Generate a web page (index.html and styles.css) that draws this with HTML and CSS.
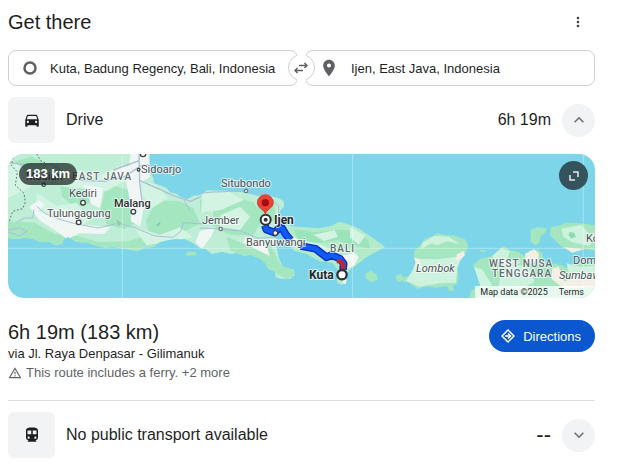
FILE: index.html
```
<!DOCTYPE html>
<html lang="en">
<head>
<meta charset="UTF-8">
<meta name="viewport" content="width=device-width, initial-scale=1.0">
<title>Get there</title>
<link rel="stylesheet" href="styles.css">
</head>
<body>
<main class="container">
  <header class="header">
    <h2>Get there</h2>
    <button class="menu-button" aria-label="More options">
      <svg width="16" height="16" viewBox="0 0 24 24"><path d="M12 8c1.1 0 2-.9 2-2s-.9-2-2-2-2 .9-2 2 .9 2 2 2zm0 2c-1.100 0-2 .9-2 2s.9 2 2 2 2-.9 2-2-.9-2-2-2zm0 6c-1.100 0-2 .9-2 2s.9 2 2 2 2-.9 2-2-.9-2-2-2z"/></svg>
    </button>
  </header>

  <form class="places">
    <label class="place" for="origin">
      <svg width="16" height="16" viewBox="0 0 16 16"><circle cx="8" cy="8" r="5.500" fill="none" stroke="#5f6062" stroke-width="2.500"/></svg>
      <input type="text" id="origin" aria-label="From" value="Kuta, Badung Regency, Bali, Indonesia">
    </label>
    <button type="button" class="swap" aria-label="Swap places">
      <svg width="14" height="14" viewBox="0 0 14 14" fill="none" stroke="#5f6062" stroke-width="1.500"><path d="M5 4.500h8M10.500 2l2.500 2.500L10.500 7M9 9.500H1M3.500 7L1 9.500 3.500 12"/></svg>
    </button>
    <label class="place place-to" for="destination">
      <svg width="20" height="20" viewBox="0 0 24 24"><path fill="#5f6062" d="M12 2C8.130 2 5 5.130 5 9c0 5.250 7 13 7 13s7-7.750 7-13c0-3.870-3.130-7-7-7zm0 9.500a2.500 2.500 0 0 1 0-5 2.500 2.500 0 0 1 0 5z"/></svg>
      <input type="text" id="destination" aria-label="To" value="Ijen, East Java, Indonesia">
    </label>
  </form>

  <section class="mode">
    <span class="mode-icon">
      <svg width="18" height="18" viewBox="0 0 24 24"><path d="M18.920 6.010C18.720 5.420 18.160 5 17.500 5h-11c-.66 0-1.210.42-1.420 1.010L3 12v8c0 .55.45 1 1 1h1c.55 0 1-.45 1-1v-1h12v1c0 .55.45 1 1 1h1c.55 0 1-.45 1-1v-8l-2.080-5.990zM6.500 16c-.83 0-1.500-.67-1.500-1.500S5.670 13 6.500 13s1.500.67 1.500 1.500S7.330 16 6.500 16zm11 0c-.83 0-1.500-.67-1.500-1.500s.67-1.500 1.500-1.500 1.500.67 1.500 1.500-.67 1.500-1.500 1.500zM5 11l1.500-4.500h11L19 11H5z"/></svg>
    </span>
    <h3>Drive</h3>
    <span class="mode-time">6h 19m</span>
    <button class="toggle" aria-label="Hide drive details">
      <svg width="20" height="20" viewBox="0 0 24 24"><path d="M12 8l-6 6 1.410 1.410L12 10.830l4.590 4.580L18 14z"/></svg>
    </button>
  </section>

  <div class="map">
    <svg class="map-canvas" viewBox="0 0 587 144" preserveAspectRatio="xMidYMid slice">
      <g transform="scale(.33333) translate(-24 -12)">
        <!-- Java -->
        <clipPath id="java"><path d="M0 0H450L449 62 453 72 460 84 461 99 480 106 500 114 510 127 528 131 545 142 562 148 580 137 600 135 622 121 680 122 730 127 775 138 810 137 838 146 851 153 852 170 840 182 832 196 837 216 830 236 826 258 829 290 838 328 848 349 862 354 882 360 884 376 870 387 850 388 828 382 825 365 805 357 795 338 783 328 768 321 750 314 733 318 710 309 690 312 668 305 636 312 618 298 600 294 580 280 556 268 525 267 500 271 478 277 461 291 434 293 412 304 390 299 364 295 340 291 317 293 280 285 262 278 230 276 205 261 192 266 187 281 164 286 152 276 120 276 100 267 72 263 54 267 0 261z"/></clipPath>
        <g clip-path="url(#java)">
          <path fill="#bfeed6" d="M0 0h900v400H0z"/>
          <path fill="#a4e6c0" d="M24 40l70-20 55 24-20 30-60 16-45 30zM180 90l65-10 30 30 10 44-60 20-40-36zM320 102l76 20 30-14 4 40-12 64-46 26-52-16-18-46zM470 150l70 4 40 20 20 46-56 30-44 20-50-8-12-50zM24 214l80 4 60 34 60 4 70 20 90-2 60-18 48 18-80 40-190-10L0 290zM640 180l50-40 70 16 30 50-30 50-70-2-50-24zM770 170l50-20 10 60-40 10zM680 260l70 30 60-10 30 60 50 30-30 20-60-40-110-50zM600 150l40-15 20 25-40 30-20-5z"/>
          <path fill="#d3f4e2" d="M24 20l60 46 10 44-70 34zM116 70l100-16 80 24 60-30 30 36-66 40-130-14zM110 128l60 40 60-10 40 50-40 36-70-14-50-60zM400 230l80 24 60-22 40 30-80 14-60 10zM420 90l46 14 40 40-50 30-30-40zM608 130l80-4 44 24-70 30-60 8zM660 196l60-26 30 30-30 40-60-10z"/>
          <path fill="#f0f6f4" d="M395 0h50l6 80-30 18 12 66-12 66-28-16-2-58-14-66zM88 170l28-20 18 14-20 20 70 22 16-30 22 10 10 36 100 10-20 20-74-2-36 18-24-18-60-40zM350 55l54-10v24l-60 16zM250 104l60 10-10 60-26-12zM600 244l44-12-8 24-30 40-20-20zM736 262l58 12 16 44-30-14-50-26zM832 178l14 10-14 80-8-24z"/>
          <path fill="#83c99f" d="M468 224l15-10-8 16zM350 208l14 12-10 8z"/>
        </g>
        <!-- Bali -->
        <path fill="#b2ebc9" d="M843 231l18-6 26 5 30 2 40 3 38-8 22-12 28 8 30 12 34 22 28 20 18 14-26 14-32 18-24 20-25 18-12 18 2 20-14 6-14-8 6-34-18-24-40-6-40-22-34-8-20-22z"/>
        <path fill="#9be3b8" d="M882 238l60 9 76-8 48 4 38 28 6 25-56-11-42-15-51 8-65-3z"/>
        <path fill="#d3f4e2" d="M940 254l64-13 10 19-42 13zM1050 231l46 26-20 27-26-22zM900 270l60 12 50 24-24 8-60-12z"/>
        <path fill="#f0f6f4" d="M1020 317l46-8 10 12-12 25-26 13-12-24zM870 252l24 16-12 12zM1030 387l10 2-3 14-10-4z"/>
        <!-- islands -->
        <path fill="#a4e6c0" d="M1095 371l18-9 17 12 3 15-17 8-18-10zM1188 377l16-6 8 18-16 7-8-9zM560 306h26l6 10-34 2z"/>
        <!-- Lombok -->
        <path fill="#a4e6c0" d="M1241 319l4-19 16-14 13-19 24-8 14-10 23 6 25 1 35 12 9 17-5 20-16 20-10 26 2 30-3 21-13 4 3 16-13 2-8-16-33 5-28-4-28 7-28-20-15-1v-14l25-4 24-12z"/>
        <path fill="#cdf2dd" d="M1268 278l34-20 44 2 34 22-40-8-26 11-22-4-30 17zM1250 326l62 2 74-10-14 36-4 44-50 2-60 10-40-18 20-32z"/>
        <path fill="#f3efe5" d="M1371 313l20-10 4 12-19 20-8-8zM1242 323l16 4 8 30-14-6z"/>
        <!-- Sumbawa -->
        <path fill="#a4e6c0" d="M1419 346l20-20 38-8 22-22 10-8 18 11 28 6 20 14 13-17 26-4 14 15 5 24 21 10 20-12 22 18 28-14 76 1v110h-395l10-30 28-14-8-28z"/>
        <path fill="#cdf2dd" d="M1476 318l30-24 24 10-8 22 40 10-30 24-36-20zM1550 345l40 6 14 44-44 26-64-6 4-38zM1422 350l24 8 30 46-30 18-10-30zM1700 340l40 10 60-4v50l-90-6z"/>
        <path fill="#f3efe5" d="M1575 311l28-13 14 14-4 20-20 8-16-8zM1656 357l20-8 16 44 60-13 48 6v24l-108 6-36-28z"/>
        <path fill="#7dd5ea" d="M1640 300l90 20 20 14-28 6-16-4-30 10-22-14-20 6z"/>
        <!-- Moyo and Tambora -->
        <path fill="#a4e6c0" d="M1592 240l18-8 30 2-4 14-14 12-4 18-12 8-14-10zM1652 232l28-6 20-8 40 2 60 8v76l-44-6-36 9-30-13-20-18-20-21zM1440 300l22 2-8 4h-14z"/>
        <path fill="#cdf2dd" d="M1684 236l60-12 20 24 24 10-20 30-54-12-24-16z"/>
        <path fill="#8edcae" d="M1708 246l14 2 6 12-14 6-8-10z"/>
        <path fill="#f3efe5" d="M1692 292l24 2 34 4-34 10z"/>
        <!-- roads -->
        <g fill="none" stroke="#a9bfd6" stroke-width="4">
          <path d="M24 38l74 8 58-4 34 26 40 22 84 4 60-14 50-34 22-2M417 12l2 86 8 60M340 60l78-28M420 92l46 20 56 26 50 16 30-14"/>
          <path d="M110 168l24 22 46 18 40 12 74 14 60-14 48 12 62 26 56 4 24-20 6-24 60 4M24 240l36-6 22 10-24 14-34-12M50 216l24-12h24l4-26" stroke-width="3"/>
          <path d="M600 130l38-4 100-3 60 6 38 40-2 60-8 34M600 234l62 3 60 6 52 22 50-4M552 150l18 34" stroke-width="3"/>
        </g>
        <path fill="none" stroke="#5c6b67" stroke-width="3" stroke-dasharray="5 6" d="M110 12l12 20 16 8M42 12l-8 34 18 20-6 40 26 24 4 26-8 20-30 8-10 30"/>
        <path fill="none" stroke="#fff" stroke-opacity=".35" stroke-width="3" d="M0 295h1800M367 0v450M1058 0v450M1750 0v450"/>
        <!-- route -->
        <path fill="none" stroke="#0b2bc4" stroke-width="23" stroke-linejoin="round" d="M795 226l4 13 25 9 14-15 8 1 12 20 14 16M902 288l44 8 34 26 14-7 26 11 11 15-2 18"/>
        <path fill="none" stroke="#0f5bf5" stroke-width="15" stroke-linejoin="round" d="M795 226l4 13 25 9 14-15 8 1 12 20 14 16M902 288l44 8 34 26 14-7 26 11 11 15-2 18"/>
        <path fill="none" stroke="#c0262d" stroke-width="13" stroke-linejoin="round" d="M1011 333l13 3 5 9v14"/>
        <g fill="#fff" stroke="#3c4043" stroke-width="4">
          <circle cx="131" cy="104" r="5"/><circle cx="249" cy="158" r="7"/><circle cx="236" cy="217" r="7"/>
          <circle cx="400" cy="185" r="7"/><circle cx="429" cy="12" r="8"/><circle cx="416" cy="59" r="4"/>
          <circle cx="738" cy="123" r="5" stroke="#70757a"/><circle cx="662" cy="237" r="5" stroke="#70757a"/><circle cx="826" cy="249" r="7"/>
        </g>
        <circle cx="1026" cy="374" r="14" fill="#fff" stroke="#303134" stroke-width="7"/>
        <circle cx="797" cy="209" r="15" fill="#fff" stroke="#303134" stroke-width="6"/>
        <circle cx="797" cy="209" r="6" fill="#303134"/>
        <path fill="#ea4335" stroke="#c5372c" stroke-width="2" d="M796 195c-1-17-24-20-24-37a24 24 0 0 1 48 0c0 17-23 20-24 37z"/>
        <circle cx="796" cy="158" r="11" fill="#a50e0e"/>
      </g>
      <g class="map-labels">
        <text x="18" y="26" class="city">Madiun</text>
        <text x="64" y="26" class="region">EAST JAVA</text>
        <text x="133" y="19">Sidoarjo</text>
        <text x="61" y="43">Kediri</text>
        <text x="106" y="53" class="city">Malang</text>
        <text x="39" y="63">Tulungagung</text>
        <text x="213" y="33">Situbondo</text>
        <text x="194" y="70">Jember</text>
        <text x="238" y="92">Banyuwangi</text>
        <text x="266" y="70" class="stop">Ijen</text>
        <text x="301" y="125" class="stop">Kuta</text>
        <text x="322" y="98" class="region">BALI</text>
        <text x="408" y="118" class="island">Lombok</text>
        <text x="481" y="113" class="region">WEST NUSA</text>
        <text x="484" y="123" class="region">TENGGARA</text>
        <text x="578" y="88">Kore</text>
        <text x="565" y="110">Dompu</text>
        <text x="551" y="125" class="island">Sumbawa</text>
      </g>
    </svg>
    <span class="distance">183 km</span>
    <button class="expand" aria-label="Expand map">
      <svg width="12" height="12" viewBox="0 0 12 12" fill="none" stroke="#e8eaed" stroke-width="1.500"><path d="M5 2h5v5M2 5v5h5"/></svg>
    </button>
    <div class="credits"><span>Map data ©2025</span><a href="#terms">Terms</a></div>
  </div>

  <section class="route">
    <div class="route-info">
      <h2>6h 19m (183 km)</h2>
      <p>via Jl. Raya Denpasar - Gilimanuk</p>
      <p class="note">
        <svg width="14" height="14" viewBox="0 0 24 24"><path fill="#5f6368" d="M12 5.990L19.530 19H4.470L12 5.990M12 2L1 21h22L12 2zm1 14h-2v2h2v-2zm0-6h-2v4h2v-4z"/></svg>
        This route includes a ferry. +2 more
      </p>
    </div>
    <button class="directions">
      <svg width="14" height="14" viewBox="0 0 14 14" fill="none" stroke="#fff" stroke-width="1.500"><path stroke-linejoin="round" d="M7 1l6 6-6 6-6-6z"/><path d="M4 7h5M7 4.500L9.500 7 7 9.500"/></svg>
      Directions
    </button>
  </section>

  <section class="mode">
    <span class="mode-icon">
      <svg width="18" height="18" viewBox="0 0 24 24"><path d="M12 2c-4.420 0-8 .5-8 4v9.500C4 17.430 5.570 19 7.500 19L6 20.500v.5h12v-.5L16.500 19c1.930 0 3.500-1.570 3.500-3.500V6c0-3.500-3.580-4-8-4zM7.500 17c-.83 0-1.500-.67-1.500-1.500S6.670 14 7.500 14s1.500.67 1.500 1.500S8.330 17 7.500 17zm3.500-6H6V6h5v5zm5.500 6c-.83 0-1.500-.67-1.500-1.500s.67-1.500 1.500-1.500 1.500.67 1.500 1.500-.67 1.500-1.500 1.500zm1.500-6h-5V6h5v5z"/></svg>
    </span>
    <h3>No public transport available</h3>
    <span class="mode-time none">--</span>
    <button class="toggle" aria-label="Show public transport details">
      <svg width="20" height="20" viewBox="0 0 24 24"><path d="M7.410 8.590L12 13.170l4.590-4.580L18 10l-6 6-6-6z"/></svg>
    </button>
  </section>
</main>
</body>
</html>
```
FILE: styles.css
```
* {
  box-sizing: border-box;
}
body {
  margin: 0;
  padding: 0 41px 8px 8px;
  font-family: "Liberation Sans", Arial, sans-serif;
  font-size: 13px;
  color: #1f1f1f;
  background-color: #fff;
}
h2, h3, p {
  margin: 0;
  font-weight: normal;
}
h2 {
  font-size: 20px;
  line-height: 24px;
}
h3 {
  flex: 1;
  font-size: 16px;
}
svg {
  display: block;
  flex: none;
}
button {
  display: flex;
  justify-content: center;
  align-items: center;
  padding: 0;
  border: none;
  font-family: inherit;
  font-size: 13px;
  cursor: pointer;
}
.header {
  display: flex;
  justify-content: space-between;
  align-items: center;
  padding: 8px 0 14px;
}
.menu-button {
  width: 34px;
  height: 28px;
  background: none;
  fill: #3c4043;
}

/* From / to */
.places {
  display: flex;
  gap: 7px;
  position: relative;
}
.place {
  flex: 1;
  display: flex;
  align-items: center;
  gap: 12px;
  min-width: 0;
  height: 36px;
  padding: 0 20px 0 13px;
  border: 1px solid #cfd0d2;
  border-radius: 8px;
}
.place input {
  flex: 1;
  min-width: 0;
  padding: 0;
  border: none;
  outline: none;
  font: inherit;
  color: inherit;
  background: none;
}
.swap {
  position: absolute;
  top: 4px;
  left: calc(50% - 14px);
  width: 27px;
  height: 27px;
  border: 1px solid #cfd0d2;
  border-radius: 50%;
  background-color: #fff;
}
/* hides the ring between the two boxes */
.swap::before {
  content: "";
  position: absolute;
  top: -2px;
  bottom: -2px;
  left: 8px;
  width: 9px;
  background-color: #fff;
}
.swap svg {
  position: relative;
}

/* Travel modes */
.mode {
  display: flex;
  align-items: center;
  gap: 11px;
  padding: 11px 0;
}
.mode-icon {
  display: flex;
  justify-content: center;
  align-items: center;
  width: 47px;
  height: 46px;
  border-radius: 6px;
  background-color: #f1f3f4;
  fill: #1f1f1f;
}
.mode-time {
  font-size: 16px;
}
.none {
  font-size: 22px;
}
.toggle {
  width: 33px;
  height: 33px;
  border-radius: 50%;
  background-color: #f1f3f4;
  fill: #70757a;
}

/* Map */
.map {
  position: relative;
  border-radius: 16px;
  overflow: hidden;
  background-color: #7dd5ea;
}
.map-canvas {
  width: 100%;
  height: 144px;
}
.map-labels {
  font-family: Roboto, sans-serif;
  font-size: 11px;
  fill: #4a5054;
  stroke: #fff;
  stroke-width: 2px;
  stroke-opacity: 0.7;
  stroke-linejoin: round;
  paint-order: stroke;
}
.city {
  font-weight: 500;
  fill: #2b2e30;
}
.region {
  font-size: 10px;
  font-weight: 500;
  letter-spacing: 1px;
  fill: #5f6b70;
}
.island {
  font-style: italic;
}
.stop {
  font-size: 12px;
  font-weight: bold;
  fill: #26282a;
}
.distance {
  position: absolute;
  top: 9px;
  left: 11px;
  padding: 0 7px;
  border-radius: 11px;
  font-weight: bold;
  line-height: 22px;
  color: #fff;
  background-color: rgba(32, 44, 40, 0.75);
}
.expand {
  position: absolute;
  top: 7px;
  right: 7px;
  width: 29px;
  height: 29px;
  border-radius: 50%;
  background-color: #35535c;
}
.credits {
  position: absolute;
  right: 0;
  bottom: 0;
  display: flex;
  gap: 11px;
  padding: 0 11px 0 5px;
  font-family: Roboto, sans-serif;
  font-size: 9px;
  line-height: 12px;
  color: #1f1f1f;
  background-color: rgba(255, 255, 255, 0.75);
}
.credits a {
  color: inherit;
  text-decoration: none;
}

/* Route summary */
.route {
  display: flex;
  justify-content: space-between;
  align-items: flex-start;
  padding: 22px 0 18px;
  border-bottom: 1px solid #dadce0;
}
.route p {
  line-height: 19px;
}
.note {
  display: flex;
  align-items: center;
  gap: 4px;
  color: #5f6368;
}
.directions {
  gap: 8px;
  height: 32px;
  padding: 0 14px 0 12px;
  border-radius: 16px;
  color: #fff;
  background-color: #0b57d0;
}
```
